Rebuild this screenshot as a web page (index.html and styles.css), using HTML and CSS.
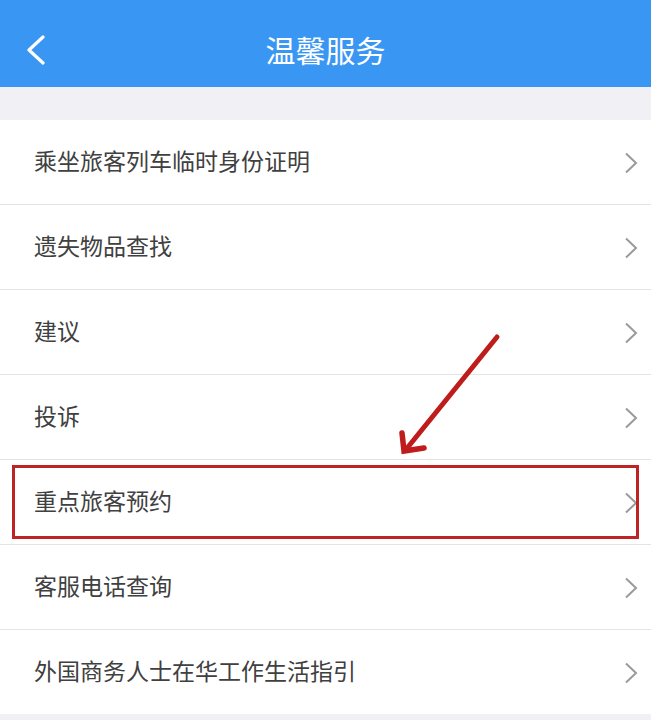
FILE: index.html
```html
<!DOCTYPE html>
<html lang="zh-CN">
<head>
<meta charset="utf-8">
<title>温馨服务</title>
<link rel="stylesheet" href="styles.css">
</head>
<body>
<div class="page">
  <header class="topbar">
    <svg class="back" width="22" height="30" viewBox="0 0 22 30"><polyline points="19,2 5,15 19,28" fill="none" stroke="#fff" stroke-width="3.2" stroke-linecap="round" stroke-linejoin="round"/></svg>
    <h1 class="title">温馨服务</h1>
  </header>
  <div class="spacer"></div>
  <ul class="list">
    <li class="item"><span class="label">乘坐旅客列车临时身份证明</span><svg class="chev" width="14" height="22" viewBox="0 0 14 22"><polyline points="2,1.5 12,11 2,20.5" fill="none" stroke="#9a9a9a" stroke-width="2"/></svg></li>
    <li class="item"><span class="label">遗失物品查找</span><svg class="chev" width="14" height="22" viewBox="0 0 14 22"><polyline points="2,1.5 12,11 2,20.5" fill="none" stroke="#9a9a9a" stroke-width="2"/></svg></li>
    <li class="item"><span class="label">建议</span><svg class="chev" width="14" height="22" viewBox="0 0 14 22"><polyline points="2,1.5 12,11 2,20.5" fill="none" stroke="#9a9a9a" stroke-width="2"/></svg></li>
    <li class="item"><span class="label">投诉</span><svg class="chev" width="14" height="22" viewBox="0 0 14 22"><polyline points="2,1.5 12,11 2,20.5" fill="none" stroke="#9a9a9a" stroke-width="2"/></svg></li>
    <li class="item highlight"><span class="label">重点旅客预约</span><svg class="chev" width="14" height="22" viewBox="0 0 14 22"><polyline points="2,1.5 12,11 2,20.5" fill="none" stroke="#9a9a9a" stroke-width="2"/></svg></li>
    <li class="item"><span class="label">客服电话查询</span><svg class="chev" width="14" height="22" viewBox="0 0 14 22"><polyline points="2,1.5 12,11 2,20.5" fill="none" stroke="#9a9a9a" stroke-width="2"/></svg></li>
    <li class="item"><span class="label">外国商务人士在华工作生活指引</span><svg class="chev" width="14" height="22" viewBox="0 0 14 22"><polyline points="2,1.5 12,11 2,20.5" fill="none" stroke="#9a9a9a" stroke-width="2"/></svg></li>
  </ul>
  <svg class="arrow" width="651" height="720" viewBox="0 0 651 720">
    <line x1="497" y1="337" x2="408" y2="447" stroke="#bf1d1b" stroke-width="5" stroke-linecap="round"/>
    <polyline points="402,433 404,451 424,448" fill="none" stroke="#bf1d1b" stroke-width="5.5" stroke-linecap="round" stroke-linejoin="miter"/>
  </svg>
</div>
</body>
</html>
```

FILE: styles.css
```css
* {
  box-sizing: border-box;
}

html, body {
  margin: 0;
  padding: 0;
  background: #f0f0f5;
}

body {
  font-family: "Noto Sans CJK SC", "Noto Sans", "Liberation Sans", sans-serif;
}

.page {
  position: relative;
  width: 651px;
  height: 720px;
  overflow: hidden;
  background: #f0f0f5;
}

.topbar {
  height: 87px;
  background: #3a96f3;
  display: flex;
  align-items: center;
  justify-content: center;
  position: relative;
}

.back {
  position: absolute;
  left: 24px;
  top: 35px;
}

.title {
  margin: 0;
  font-size: 30px;
  font-weight: 400;
  color: #ffffff;
  line-height: 1;
  padding-top: 10px;
}

.spacer {
  height: 33px;
}

.list {
  list-style: none;
  margin: 0;
  padding: 0;
  background: #ffffff;
}

.item {
  height: 85px;
  display: flex;
  align-items: center;
  justify-content: space-between;
  padding: 0 13px 0 34px;
  border-bottom: 1px solid #e4e4e6;
  position: relative;
}

.item:last-child {
  border-bottom: none;
  height: 84px;
}

.label {
  font-size: 23px;
  color: #404040;
  line-height: 1;
  margin-top: -4px;
}

.chev {
  display: block;
  margin-top: 1px;
}

.highlight::after {
  content: "";
  position: absolute;
  left: 12px;
  right: 12px;
  top: 5px;
  bottom: 5px;
  border: 3px solid #bf2326;
  pointer-events: none;
}

.arrow {
  position: absolute;
  left: 0;
  top: 0;
  pointer-events: none;
}
```
